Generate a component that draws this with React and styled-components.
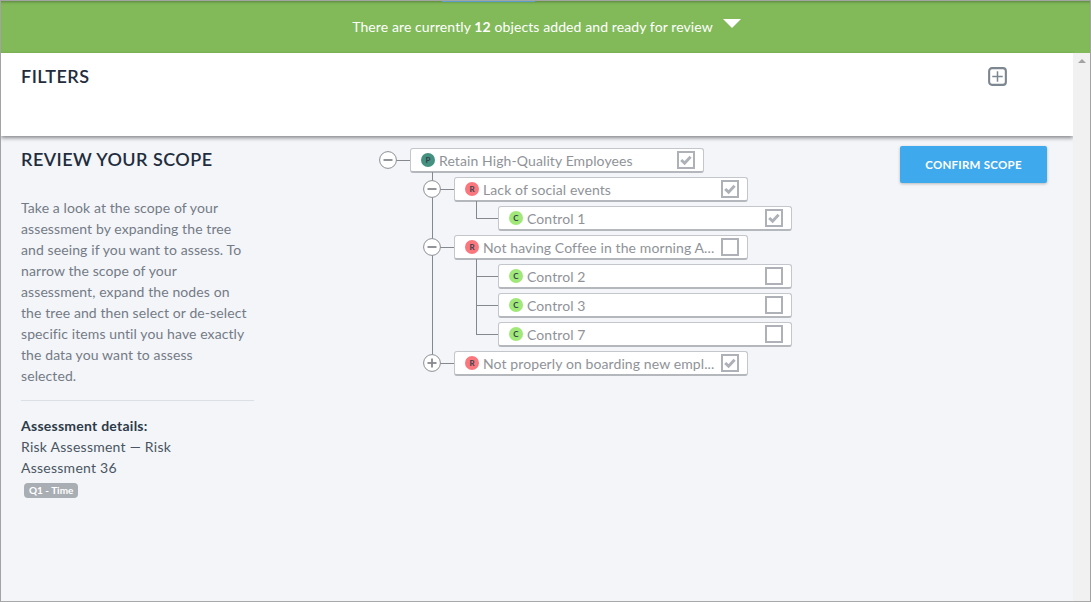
import React from 'react';
import styled, { createGlobalStyle } from 'styled-components';

const GlobalStyle = createGlobalStyle`
  html, body {
    margin: 0;
    padding: 0;
    height: 100%;
    overflow: hidden;
  }
  * {
    box-sizing: border-box;
  }
  body {
    font-family: "Lato", "Open Sans", sans-serif;
  }
`;

const Frame = styled.div`
  position: relative;
  width: 1091px;
  height: 602px;
  border: 1px solid #a3a3a3;
  border-bottom-color: #a8a8a8;
  background: #f3f5f9;
  display: flex;
  flex-direction: column;
  overflow: hidden;
`;

const TabSliver = styled.div`
  position: absolute;
  top: -1px;
  left: 441px;
  width: 93px;
  height: 2px;
  background: #5b9fc9;
`;

const Banner = styled.div`
  height: 52px;
  flex-shrink: 0;
  background: #82ba5a;
  box-shadow: inset 0 3px 3px -2px rgba(60, 90, 40, 0.6);
  color: #fff;
  font-size: 14px;
  letter-spacing: 0.1px;
  display: flex;
  align-items: center;
  justify-content: center;
  gap: 10px;
  padding: 0 0 1px 2px;

  b {
    font-weight: 700;
  }
`;

const Caret = styled.span`
  width: 0;
  height: 0;
  border-left: 9px solid transparent;
  border-right: 9px solid transparent;
  border-top: 9px solid #fff;
  margin-top: -6px;
`;

const Body = styled.div`
  flex: 1;
  display: flex;
  min-height: 0;
`;

const Page = styled.div`
  flex: 1;
  min-width: 0;
  display: flex;
  flex-direction: column;
`;

const Scrollbar = styled.div`
  width: 17px;
  background: #f1f1f1;
  display: flex;
  justify-content: center;
  padding-top: 6px;
`;

const ScrollArrow = styled.span`
  width: 0;
  height: 0;
  border-left: 4px solid transparent;
  border-right: 4px solid transparent;
  border-bottom: 4px solid #a3a3a3;
`;

const FiltersPanel = styled.div`
  height: 83px;
  flex-shrink: 0;
  background: #fff;
  box-shadow: 0 2px 4px rgba(0, 0, 0, 0.45);
  display: flex;
  justify-content: space-between;
  align-items: flex-start;
  padding: 13px 66px 0 20px;
`;

const Heading = styled.h2`
  margin: 0;
  font-size: 18px;
  line-height: 20px;
  font-weight: 600;
  letter-spacing: 0.45px;
  color: #1f2d3d;
`;

const PlusBox = styled.svg`
  width: 19px;
  height: 19px;
  margin-top: 1px;
`;

const Content = styled.div`
  flex: 1;
  display: flex;
  align-items: flex-start;
`;

const Sidebar = styled.aside`
  width: 253px;
  padding: 13px 0 0 20px;
  flex-shrink: 0;
`;

const Intro = styled.p`
  margin: 28px 0 14px;
  width: 228px;
  font-size: 14px;
  line-height: 21px;
  letter-spacing: 0.1px;
  color: #747b86;
`;

const Divider = styled.hr`
  margin: 0 0 14px;
  border: 0;
  border-top: 1px solid #dcdfe5;
`;

const DetailTitle = styled.div`
  font-size: 14px;
  line-height: 21px;
  font-weight: 700;
  letter-spacing: 0.25px;
  color: #2d3a48;
`;

const DetailText = styled.div`
  font-size: 14px;
  line-height: 21px;
  letter-spacing: 0.25px;
  color: #4a5562;
  width: 180px;
`;

const Tag = styled.span`
  display: inline-block;
  margin: 5px 0 0 3px;
  padding: 0 5px;
  height: 15px;
  line-height: 15px;
  border-radius: 4px;
  background: #a9adb4;
  color: #fff;
  font-size: 10px;
  font-weight: 700;
`;

const TreeArea = styled.div`
  width: 520px;
  margin-left: 126px;
  padding-top: 12px;
  flex-shrink: 0;
`;

const Group = styled.div`
  position: relative;
  margin-left: 44px;

  &::before {
    content: '';
    position: absolute;
    left: 8px;
    top: -5px;
    bottom: 17px;
    width: 1px;
    background: #85898f;
  }
`;

const Row = styled.div`
  position: relative;
  display: flex;
  align-items: center;
  height: 29px;
  padding: 0 0 4px 30px;
`;

const Elbow = styled.span`
  position: absolute;
  left: 8px;
  top: 12px;
  width: 22px;
  height: 1px;
  background: #85898f;
`;

const Toggle = styled.svg`
  position: absolute;
  left: -1px;
  top: 3px;
  width: 18px;
  height: 18px;
  z-index: 1;
`;

const Node = styled.div`
  position: relative;
  width: 294px;
  height: 25px;
  background: #fff;
  border: 1px solid #c3c6cb;
  border-bottom: 2px solid #b4b7bc;
  border-radius: 3px;
  display: flex;
  align-items: center;
  padding: 0 8px 0 10px;
  gap: 4px;
`;

const Badge = styled.span`
  width: 14px;
  height: 14px;
  border-radius: 50%;
  flex-shrink: 0;
  background: ${(p) => p.$color};
  color: #33404d;
  font-size: 8px;
  font-weight: 700;
  display: flex;
  align-items: center;
  justify-content: center;
`;

const Label = styled.span`
  flex: 1;
  min-width: 0;
  font-size: 14px;
  letter-spacing: 0.1px;
  color: #8f9398;
  white-space: nowrap;
  overflow: hidden;
`;

const Check = styled.svg`
  width: 18px;
  height: 18px;
  flex-shrink: 0;
`;

const ConfirmButton = styled.button`
  margin: 10px 0 0 0;
  width: 147px;
  height: 37px;
  flex-shrink: 0;
  border: 0;
  border-radius: 2px;
  background: #3fa9ee;
  box-shadow: 0 1px 3px rgba(0, 0, 0, 0.25);
  color: #fff;
  font-family: inherit;
  font-size: 11.5px;
  font-weight: 700;
  letter-spacing: 0.25px;
`;

const BADGES = {
  P: '#45917f',
  R: '#fb777e',
  C: '#a0e878',
};

function ToggleIcon({ open }) {
  return (
    <Toggle viewBox="0 0 18 18">
      <circle cx="9" cy="9" r="8.4" fill="#fff" stroke="#8b8f94" strokeWidth="1" />
      <path d="M4.5 9h9" stroke="#85898f" strokeWidth="1.8" />
      {!open && <path d="M9 4.5v9" stroke="#85898f" strokeWidth="1.8" />}
    </Toggle>
  );
}

function CheckIcon({ checked }) {
  return (
    <Check viewBox="0 0 18 18">
      <rect x="1" y="1" width="16" height="16" fill="#fff" stroke="#aeb2b8" strokeWidth="2" />
      {checked && <path d="M4.2 9l3.4 3.2 6-6.4" fill="none" stroke="#aeb2b8" strokeWidth="3" />}
    </Check>
  );
}

function TreeRow({ type, label, checked, toggle, elbow }) {
  return (
    <Row>
      {(toggle || elbow) && <Elbow />}
      {toggle && <ToggleIcon open={toggle === 'open'} />}
      <Node>
        <Badge $color={BADGES[type]}>{type}</Badge>
        <Label>{label}</Label>
        <CheckIcon checked={checked} />
      </Node>
    </Row>
  );
}

const App = () => (
  <Frame>
    <GlobalStyle />
    <TabSliver />
    <Banner>
      <span>
        There are currently <b>12</b> objects added and ready for review
      </span>
      <Caret />
    </Banner>
    <Body>
      <Page>
        <FiltersPanel>
          <Heading>FILTERS</Heading>
          <PlusBox viewBox="0 0 20 20">
            <rect x="1.2" y="1.2" width="17.6" height="17.6" rx="3" fill="none" stroke="#7d8791" strokeWidth="2.2" />
            <path d="M10 4.5v11M4.5 10h11" stroke="#7d8791" strokeWidth="1.6" />
          </PlusBox>
        </FiltersPanel>
        <Content>
          <Sidebar>
            <Heading>REVIEW YOUR SCOPE</Heading>
            <Intro>
              Take a look at the scope of your assessment by expanding the tree and seeing if you want to assess. To
              narrow the scope of your assessment, expand the nodes on the tree and then select or de-select specific
              items until you have exactly the data you want to assess selected.
            </Intro>
            <Divider />
            <DetailTitle>Assessment details:</DetailTitle>
            <DetailText>Risk Assessment — Risk Assessment 36</DetailText>
            <Tag>Q1 - Time</Tag>
          </Sidebar>
          <TreeArea>
            <TreeRow type="P" label="Retain High-Quality Employees" checked toggle="open" />
            <Group>
              <TreeRow type="R" label="Lack of social events" checked toggle="open" />
              <Group>
                <TreeRow type="C" label="Control 1" checked elbow />
              </Group>
              <TreeRow type="R" label="Not having Coffee in the morning A..." toggle="open" />
              <Group>
                <TreeRow type="C" label="Control 2" elbow />
                <TreeRow type="C" label="Control 3" elbow />
                <TreeRow type="C" label="Control 7" elbow />
              </Group>
              <TreeRow type="R" label="Not properly on boarding new empl..." checked toggle="closed" />
            </Group>
          </TreeArea>
          <ConfirmButton>CONFIRM SCOPE</ConfirmButton>
        </Content>
      </Page>
      <Scrollbar>
        <ScrollArrow />
      </Scrollbar>
    </Body>
  </Frame>
);

export default App;
